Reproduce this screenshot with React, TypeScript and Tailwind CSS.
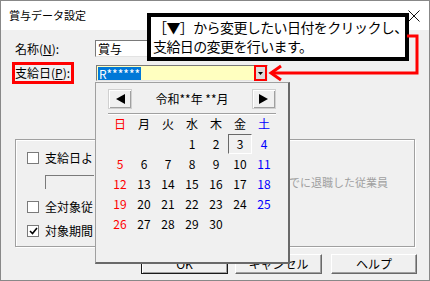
import React from "react";

const days: (number | null)[] = [null, null, null, 1, 2, 3, 4];
for (let d = 5; d <= 30; d++) days.push(d);

const heads = ["日", "月", "火", "水", "木", "金", "土"];

function dayColor(i: number) {
  if (i % 7 === 0) return "text-[#ff0000]";
  if (i % 7 === 6) return "text-[#0000ff]";
  return "text-black";
}

function CheckBox({ checked }: { checked?: boolean }) {
  return (
    <div className="w-[12px] h-[12px] border border-[#7a7a7a] bg-white flex items-center justify-center shrink-0">
      {checked && (
        <svg width="9" height="8" viewBox="0 0 9 8">
          <polyline points="1,4 3.5,6.5 8,1" fill="none" stroke="#000" strokeWidth="1.6" />
        </svg>
      )}
    </div>
  );
}

function Button({ label, primary }: { label: string; primary?: boolean }) {
  return (
    <div
      className={`h-[20px] flex items-center justify-center text-[12px] bg-[#f0f0f0] ${
        primary
          ? "border border-[#1a1a1a] shadow-[inset_1px_1px_0_#fff,inset_-1px_-1px_0_#a0a0a0]"
          : "border border-t-white border-l-white border-b-[#696969] border-r-[#696969] shadow-[inset_-1px_-1px_0_#a0a0a0]"
      }`}
    >
      {label}
    </div>
  );
}

export default function App() {
  return (
    <div
      className="relative w-[430px] h-[281px] overflow-hidden bg-[#f0f0f0] border border-[#888888] text-black"
      style={{ fontFamily: '"Noto Sans CJK JP", "Noto Sans", sans-serif' }}
    >
      {/* title bar */}
      <div className="h-[29px] bg-white flex items-center justify-between pl-[8px] pr-[9px]">
        <span className="text-[11px] leading-none">賞与データ設定</span>
        <svg width="12" height="12" viewBox="0 0 12 12">
          <path d="M0.5 0.5 L11.5 11.5 M11.5 0.5 L0.5 11.5" stroke="#111" strokeWidth="1" />
        </svg>
      </div>

      {/* name row */}
      <div className="mt-[10px] pl-[11px] flex items-center h-[17px]">
        <div className="w-[83px] pl-[3px] text-[12px] leading-none">
          名称(<span className="underline">N</span>):
        </div>
        <div className="w-[173px] h-[17px] bg-white border-t border-l border-[#7a7a7a] border-b-[#e3e3e3] border-r-[#e3e3e3] border-b border-r flex items-center pl-[2px] text-[12px] leading-none">
          賞与
        </div>
      </div>

      {/* pay date row */}
      <div className="mt-[5px] pl-[11px] flex items-center h-[22px]">
        <div className="w-[62px] h-[22px] border-[3px] border-[#ff0000] flex items-center text-[12px] leading-none">
          支給日(<span className="underline">P</span>):
        </div>
        <div className="ml-[22px] w-[172px] h-[16px] bg-[#ffffc0] border-t border-l border-[#7a7a7a] border-b-[#e3e3e3] border-r-[#e3e3e3] border-b border-r flex items-center pl-[1px]">
          <span className="bg-[#0078d7] text-white text-[12px] leading-[13px] px-[1px]">R******</span>
          <div className="ml-auto w-[13px] h-[16px] border-[2px] border-[#ff0000] bg-[#dcdcdc] flex items-center justify-center">
            <svg width="5" height="3" viewBox="0 0 5 3">
              <polygon points="0,0 5,0 2.5,3" fill="#000" />
            </svg>
          </div>
        </div>
      </div>

      {/* group box */}
      <div className="mt-[55px] ml-[14px] w-[400px] h-[108px] border border-[#a0a0a0] shadow-[inset_1px_1px_0_#fff,1px_1px_0_#fff] pt-[12px]">
        <div className="pl-[11px] flex items-center gap-[6px] h-[12px]">
          <CheckBox />
          <span className="w-[48px] overflow-hidden whitespace-nowrap text-[12px] leading-none">支給日より前</span>
        </div>
        <div className="mt-[11px] pl-[29px] flex items-center h-[14px]">
          <div className="w-[49px] h-[14px] bg-[#f0f0f0] border-t border-l border-[#7a7a7a]" />
          <div className="ml-[195px] w-[99px] flex justify-end overflow-hidden whitespace-nowrap text-[11px] leading-none text-[#a0a0a0]">
            <span className="shrink-0">までに退職した従業員</span>
          </div>
        </div>
        <div className="mt-[12px] pl-[11px] flex items-center gap-[6px] h-[12px]">
          <CheckBox />
          <span className="w-[48px] overflow-hidden whitespace-nowrap text-[12px] leading-none">全対象従業員</span>
        </div>
        <div className="mt-[12px] pl-[11px] flex items-center gap-[6px] h-[12px]">
          <CheckBox checked />
          <span className="w-[48px] overflow-hidden whitespace-nowrap text-[12px] leading-none">対象期間中の</span>
        </div>
      </div>

      {/* buttons */}
      <div className="mt-[7px] pl-[140px] flex items-center">
        <div className="w-[87px]">
          <Button label="OK" primary />
        </div>
        <div className="w-[87px] ml-[7px]">
          <Button label="キャンセル" />
        </div>
        <div className="w-[86px] ml-[9px]">
          <Button label="ヘルプ" />
        </div>
      </div>

      {/* calendar popup */}
      <div className="absolute left-[94px] top-[81px] w-[195px] h-[182px] bg-[#f0f0f0] border-l border-t border-[#a0a0a0] border-r-[2px] border-b-[2px] border-r-[#696969] border-b-[#696969] pl-[12px] pt-[6px]">
        <div className="w-[168px] flex items-center justify-between h-[20px]">
          <div className="w-[24px] h-[20px] flex items-center justify-center bg-[#f0f0f0] border border-[#d0d0d0] shadow-[inset_1px_1px_0_#fff,inset_-1px_-1px_0_#a0a0a0]">
            <svg width="9" height="10" viewBox="0 0 9 10">
              <polygon points="9,0 9,10 0,5" fill="#000" />
            </svg>
          </div>
          <span className="text-[12px] leading-none">令和**年 **月</span>
          <div className="w-[24px] h-[20px] flex items-center justify-center bg-[#f0f0f0] border border-[#d0d0d0] shadow-[inset_1px_1px_0_#fff,inset_-1px_-1px_0_#a0a0a0]">
            <svg width="9" height="10" viewBox="0 0 9 10">
              <polygon points="0,0 0,10 9,5" fill="#000" />
            </svg>
          </div>
        </div>
        <div className="mt-[4px] w-[168px] h-[2px] border-t border-[#a0a0a0] border-b border-b-white" />
        <div className="grid grid-cols-[repeat(7,24px)] auto-rows-[20px] -mt-[1px]">
          {heads.map((h, i) => (
            <div key={h} className={`flex items-center justify-center text-[12px] leading-none ${dayColor(i)}`}>
              {h}
            </div>
          ))}
          {days.map((d, i) => (
            <div
              key={i}
              className={`flex items-center justify-center text-[12px] leading-none ${dayColor(i)} ${
                d === 3 ? "border-t border-l border-[#696969] border-b-white border-r-white border-b border-r" : ""
              }`}
            >
              {d ?? ""}
            </div>
          ))}
        </div>
      </div>

      {/* callout */}
      <div className="absolute left-[146px] top-[12px] w-[262px] h-[48px] bg-white border-[4px] border-black pl-[2px] pt-[1px] text-[14px] tracking-[-0.6px] leading-[19px] whitespace-nowrap">
        <div>［▼］から変更したい日付をクリックし、</div>
        <div>支給日の変更を行います。</div>
      </div>

      {/* connector arrow */}
      <svg className="absolute left-0 top-0 pointer-events-none" width="430" height="281" viewBox="0 0 430 281">
        <polyline points="406,35 416,35 416,72 271,72" fill="none" stroke="#ff0000" strokeWidth="3" />
        <polyline points="280,65 270,72 280,79" fill="none" stroke="#ff0000" strokeWidth="3" />
      </svg>
    </div>
  );
}
